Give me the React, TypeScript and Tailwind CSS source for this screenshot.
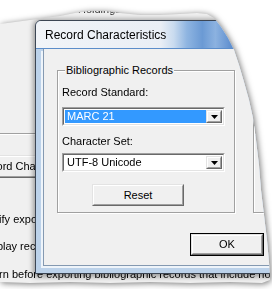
import React from 'react';

const Raised: React.FC<{ className?: string; inner?: string; children?: React.ReactNode }> = ({ className = '', inner = 'justify-center', children }) => (
  <div className={`border border-t-[#e3e3e3] border-l-[#e3e3e3] border-r-[#696969] border-b-[#696969] bg-[#f0f0f0] ${className}`}>
    <div className={`w-full h-full border border-t-white border-l-white border-r-[#a0a0a0] border-b-[#a0a0a0] flex items-center ${inner}`}>
      {children}
    </div>
  </div>
);

const Combo: React.FC<{ text: string; selected?: boolean }> = ({ text, selected }) => (
  <div className="h-[19px] w-[163px] border border-t-[#a0a0a0] border-l-[#a0a0a0] border-r-white border-b-white">
    <div className="h-full w-full border border-t-[#696969] border-l-[#696969] border-r-[#e3e3e3] border-b-[#e3e3e3] bg-white flex p-[1px]">
      <div className={`flex-1 flex items-center pl-[2px] text-[11px] leading-[13px] ${selected ? 'bg-[#3399ff] text-white' : 'text-black'}`}>
        {text}
      </div>
      <Raised className="w-[16px] h-full">
        <svg width="7" height="4" viewBox="0 0 7 4">
          <path d="M0 0h7L3.5 4z" fill="#000" />
        </svg>
      </Raised>
    </div>
  </div>
);

const App: React.FC = () => {
  return (
    <div className="w-[272px] h-[289px] bg-white overflow-hidden font-['Liberation_Sans',Arial,sans-serif] text-black">
      <div className="drop-shadow-[1px_1px_3px_rgba(0,0,0,0.55)]">
        <div className="relative w-[272px] h-[289px] bg-[#f0f0f0] [clip-path:polygon(0px_24px,15px_22px,30px_20px,45px_18px,60px_16px,75px_13px,90px_11px,105px_11px,120px_13px,140px_15px,160px_15px,180px_14px,197px_13px,207px_14px,214px_18px,221px_27px,228px_38px,234px_50px,239px_65px,244px_82px,249px_100px,253px_118px,256px_140px,259px_165px,261px_190px,264px_215px,267px_240px,269px_262px,270px_280px,262px_283px,230px_282px,190px_283px,150px_282px,110px_283px,70px_282px,30px_283px,0px_282px)]">
          {/* window underneath */}
          <div className="flex flex-col text-[11px] leading-[13px] whitespace-nowrap">
            <div className="pt-[3px] pl-[78px] text-[#333]">Holdings Records &nbsp; Authority Records &nbsp; Options</div>
            <div className="mt-[117px] h-[2px] w-full border-t border-t-[#a0a0a0] border-b border-b-white" />
            <Raised className="mt-[20px] -ml-[30px] w-[170px] h-[23px]" inner="justify-start pl-[5px]">
              Record Characteristics...
            </Raised>
            <div className="mt-[35px] -ml-[18px]">Notify export completion</div>
            <div className="mt-[14px] -ml-[19px]">Display records after export</div>
            <div className="mt-[15px] -ml-[17px]">Warn before exporting bibliographic records that include holdings</div>
          </div>

          {/* dialog */}
          <div className="absolute left-[35px] top-[20px] w-[262px] h-[254px] rounded-tl-[6px] border border-[#3c4654] bg-[#bcd2ea] flex flex-col shadow-[0_1px_5px_2px_rgba(0,0,0,0.35)]">
            <div className="h-[28px] shrink-0 rounded-tl-[5px] border-b border-b-[#5b8dca] bg-[linear-gradient(90deg,#f1f4f8_0%,#e9eef5_48%,#c9dbef_53%,#8fb5e1_58%,#6b9ad4_64%,#8cb2e0_69%,#5f8fcf_75%,#7ea9dc_85%,#6a98d3_100%)] flex items-center pl-[9px] text-[12px]">
              Record Characteristics
            </div>
            <div className="flex-1 ml-[7px] bg-[#f0f0f0] border-l border-b border-[#8499b1] shadow-[-2px_2px_0_rgba(255,255,255,0.75)] flex flex-col pt-[21px] pl-[13px] text-[11px] leading-[13px]">
              <div className="flex gap-[18px]">
                <div className="relative w-[178px] h-[143px] shrink-0 border border-[#a0a0a0] shadow-[inset_1px_1px_0_#fff,1px_1px_0_#fff]">
                  <span className="absolute left-[7px] -top-[7px] px-[1px] bg-[#f0f0f0]">Bibliographic Records</span>
                  <div className="flex flex-col pl-[4px] pt-[15px]">
                    <div>Record Standard:</div>
                    <div className="mt-[8px]">
                      <Combo text="MARC 21" selected />
                    </div>
                    <div className="mt-[9px]">Character Set:</div>
                    <div className="mt-[5px]">
                      <Combo text="UTF-8 Unicode" />
                    </div>
                    <Raised className="mt-[12px] ml-[30px] w-[92px] h-[22px]">Reset</Raised>
                  </div>
                </div>
                <div className="w-[200px] h-[143px] shrink-0 border border-[#a0a0a0] shadow-[inset_1px_1px_0_#fff,1px_1px_0_#fff]" />
              </div>
              <div className="mt-[20px] ml-[133px] w-[74px] h-[23px] border border-black">
                <Raised className="w-full h-full">OK</Raised>
              </div>
            </div>
            <div className="h-[7px] shrink-0" />
          </div>
        </div>
      </div>
    </div>
  );
};

export default App;
